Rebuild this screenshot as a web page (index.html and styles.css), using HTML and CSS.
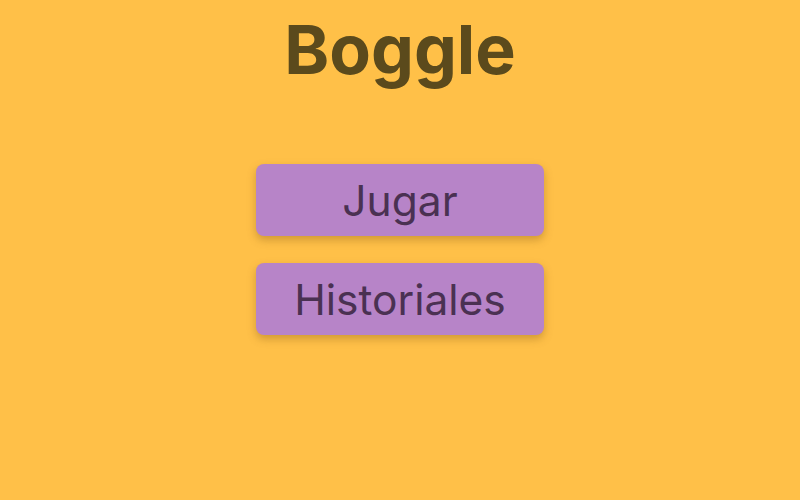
FILE: index.html
```html
<!DOCTYPE html>
<html lang="es">
<head>
<meta charset="utf-8">
<title>Boggle</title>
<link rel="stylesheet" href="styles.css">
</head>
<body>
<main class="home">
  <h1 class="title">Boggle</h1>
  <nav class="menu">
    <button class="menu-btn">Jugar</button>
    <button class="menu-btn">Historiales</button>
  </nav>
</main>
</body>
</html>
```
FILE: styles.css
```css
html, body {
  margin: 0;
  padding: 0;
  height: 100%;
}
body {
  background: #ffc048;
  font-family: Inter, "Noto Sans", sans-serif;
}
.home {
  display: flex;
  flex-direction: column;
  align-items: center;
}
.title {
  margin: 11px 0 0;
  font-size: 68px;
  font-weight: 700;
  line-height: 76px;
  color: #5b4a1c;
}
.menu {
  margin-top: 77px;
  display: flex;
  flex-direction: column;
  gap: 27px;
}
.menu-btn {
  width: 288px;
  height: 72px;
  border: none;
  border-radius: 8px;
  background: #b784c8;
  color: #4a3152;
  font-family: Inter, "Noto Sans", sans-serif;
  font-size: 42.5px;
  font-weight: 400;
  box-shadow: 0 4px 8px rgba(120, 80, 20, 0.35);
  padding: 0;
}
```
